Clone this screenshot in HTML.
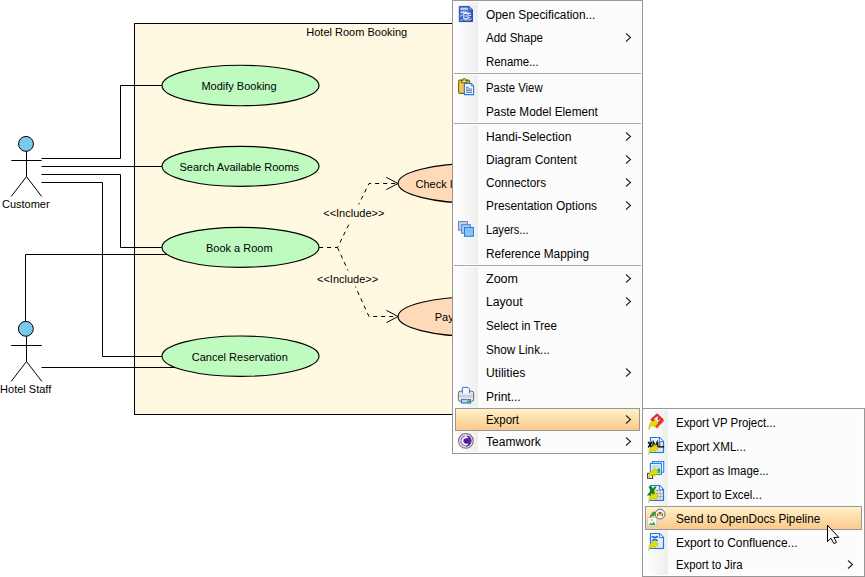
<!DOCTYPE html>
<html><head><meta charset="utf-8">
<style>
html,body{margin:0;padding:0;width:865px;height:577px;overflow:hidden;background:#fff;position:relative;font-family:"Liberation Sans",sans-serif;}
svg.d{position:absolute;left:0;top:0;}
.menu{position:absolute;background:#fcfcfc;border:1px solid #979797;box-sizing:border-box;box-shadow:inset 0 0 0 1px #fff;}
.col{position:absolute;top:1px;bottom:1px;background:linear-gradient(to right,#ffffff,#eeeeee);}
.t{position:absolute;font-size:12px;transform-origin:0 0;color:#000;white-space:pre;line-height:14px;}
.sep{position:absolute;height:1px;background:#a8a8a8;}
.sepw{position:absolute;height:3px;background:#fcfcfc;}
.hl{position:absolute;box-sizing:border-box;border:1px solid #979797;background:linear-gradient(to bottom,#fff1c8,#fdd9a4 60%,#fbc98c);}
.arr{position:absolute;}
</style></head><body>
<svg class="d" width="865" height="577" viewBox="0 0 865 577">
 <rect x="134.5" y="23.5" width="400" height="391" fill="#fff9e1" stroke="#000" stroke-width="1"/>
 <g font-family="Liberation Sans" font-size="11" fill="#000">
  <text x="306.3" y="36">Hotel Room Booking</text>
 </g>
 <g fill="none" stroke="#000" stroke-width="1">
  <!-- customer lines -->
  <polyline points="41.5,158.5 120.5,158.5 120.5,85.5 162,85.5"/>
  <polyline points="41.5,166.5 162,166.5"/>
  <polyline points="41.5,174.5 120.5,174.5 120.5,247.5 162,247.5"/>
  <polyline points="41.5,182.5 102.5,182.5 102.5,356.5 162,356.5"/>
  <!-- staff lines -->
  <polyline points="25.5,321.2 25.5,254.5 167,254.5"/>
  <polyline points="41.5,367.5 175,367.5"/>
 </g>
 <g fill="none" stroke="#000" stroke-width="1" stroke-dasharray="4,4">
  <polyline points="319,247.5 337.5,247.5 369,183.5 398,183.5"/>
  <polyline points="337.5,247.5 369,316.5 398,316.5"/>
 </g>
 <g fill="#bffbbf" stroke="#000" stroke-width="1.15">
  <ellipse cx="240.5" cy="85.5" rx="78.5" ry="20.3"/>
  <ellipse cx="240.5" cy="166.3" rx="78.5" ry="20"/>
  <ellipse cx="240.5" cy="247.3" rx="78.5" ry="20"/>
  <ellipse cx="240.5" cy="356.2" rx="78.5" ry="20.2"/>
 </g>
 <g fill="#fedab9" stroke="#000" stroke-width="1.15">
  <ellipse cx="476.6" cy="183.3" rx="78.5" ry="19.9"/>
  <ellipse cx="476.6" cy="316.6" rx="78.5" ry="19.9"/>
 </g>
 <rect x="321" y="204.5" width="65" height="17" fill="#fff9e1"/>
 <rect x="315" y="270.5" width="65" height="16" fill="#fff9e1"/>
 <g font-family="Liberation Sans" font-size="11" fill="#000" text-anchor="middle">
  <text x="239" y="90">Modify Booking</text>
  <text x="239.3" y="170.5">Search Available Rooms</text>
  <text x="239.3" y="251.5">Book a Room</text>
  <text x="239.8" y="360.5">Cancel Reservation</text>
  <text x="353.8" y="217">&lt;&lt;Include&gt;&gt;</text>
  <text x="347.6" y="283">&lt;&lt;Include&gt;&gt;</text>
 </g>
 <g font-family="Liberation Sans" font-size="11" fill="#000">
  <text x="415.5" y="188">Check In</text>
  <text x="434.7" y="320.5">Pay</text>
 </g>

 <g fill="none" stroke="#000" stroke-width="1">
  <polyline points="386.4,177.4 398,183.5 386.4,189.5"/>
  <polyline points="386.4,310.3 398,316.5 386.4,322.6"/>
 </g>
 <!-- actors -->
 <g fill="none" stroke="#000" stroke-width="1">
  <circle cx="26" cy="143.9" r="7.45" fill="#7ac8f0"/>
  <line x1="11.3" y1="160.5" x2="41.7" y2="160.5"/>
  <line x1="26.5" y1="151.4" x2="26.5" y2="176.6"/>
  <polyline points="11.2,196.5 26.5,176.6 41.7,196.5"/>
  <circle cx="25.85" cy="328.8" r="7.45" fill="#7ac8f0"/>
  <line x1="11.2" y1="345.5" x2="41.8" y2="345.5"/>
  <line x1="26.5" y1="336.3" x2="26.5" y2="361.5"/>
  <polyline points="11.2,381.4 26.5,361.5 41.8,381.4"/>
 </g>
 <g font-family="Liberation Sans" font-size="11" fill="#000" text-anchor="middle">
  <text x="25.8" y="208">Customer</text>
  <text x="25.7" y="393">Hotel Staff</text>
 </g>
</svg>

<!-- main menu -->
<div class="menu" style="left:452px;top:0px;width:191px;height:454px;">
</div>
<div class="col" style="left:455px;top:2px;width:23px;height:450px;"></div>
<div class="sepw" style="left:453px;top:72px;width:189px;"></div>
<div class="sep" style="left:454px;top:73px;width:187px;"></div>
<div class="sepw" style="left:453px;top:122px;width:189px;"></div>
<div class="sep" style="left:454px;top:123px;width:187px;"></div>
<div class="sepw" style="left:453px;top:264px;width:189px;"></div>
<div class="sep" style="left:454px;top:265px;width:187px;"></div>
<div class="hl" style="left:455px;top:408px;width:185px;height:23px;"></div>


<svg width="0" height="0" style="position:absolute"><defs><linearGradient id="gd" x1="0" y1="0" x2="0" y2="1"><stop offset="0" stop-color="#fafbfd"/><stop offset="1" stop-color="#d9dfe9"/></linearGradient></defs></svg>
<!-- main icons -->
<svg style="position:absolute;left:455px;top:3px" width="22" height="22" viewBox="0 0 22 22">
 <defs><linearGradient id="gb" x1="0" y1="0" x2="1" y2="1"><stop offset="0" stop-color="#3d6fd4"/><stop offset="1" stop-color="#2450b0"/></linearGradient></defs>
 <path d="M4.3,3.4 L14.4,3.4 L17.5,6.6 L17.5,18.6 L4.3,18.6 Z" fill="url(#gb)" stroke="#2a4fa6" stroke-width="1"/>
 <path d="M14.4,3.4 L14.4,6.6 L17.5,6.6 Z" fill="#7d9fe6"/>
 <rect x="5.4" y="4.6" width="7.6" height="2.4" fill="#aabfee"/>
 <rect x="5.4" y="5.5" width="7.6" height="0.6" fill="#d9e3f8"/>
 <rect x="5.4" y="7.6" width="9" height="0.9" fill="#8aa7e6"/>
 <path d="M5.6,9.8 C7.5,8.9 10.5,9 13,10.3 L15.8,10.3" stroke="#eef3fd" stroke-width="1.2" fill="none"/>
 <rect x="8.8" y="10.4" width="4.2" height="5.4" fill="none" stroke="#eef3fd" stroke-width="1.1"/>
 <rect x="10.2" y="11.8" width="1.4" height="2.4" fill="#c5d5f5"/>
 <path d="M5.4,12.2 L7.6,12.2 M5.4,13.6 L6.2,13.6 M13.6,12.4 L16.2,12.4 M13.6,14.4 L15.2,14.4 M9.4,16.8 L12.4,16.8 M13.2,17.4 L16.6,15.8" stroke="#e6edfb" stroke-width="1" fill="none"/>
 <rect x="5.4" y="16.6" width="2.2" height="1" fill="#dfe8fa"/>
</svg>
<svg style="position:absolute;left:455px;top:74px" width="22" height="22" viewBox="0 0 22 22">
 <defs><linearGradient id="gc" x1="0" y1="0" x2="1" y2="0"><stop offset="0" stop-color="#f0d27a"/><stop offset="1" stop-color="#d9a93a"/></linearGradient></defs>
 <rect x="3.6" y="6.2" width="11" height="13.2" rx="1.2" fill="url(#gc)" stroke="#7f6a00" stroke-width="1.2"/>
 <path d="M6.4,8.8 L6.4,6.4 L7.8,6.4 C7.8,3.9 10.6,3.9 10.6,6.4 L12,6.4 L12,8.8 Z" fill="#f3dc80" stroke="#7f6a00" stroke-width="1.1"/>
 <path d="M9.4,9.5 L16.4,9.5 L18.6,11.7 L18.6,20.6 L9.4,20.6 Z" fill="#f6f3ea" stroke="#1f7fe8" stroke-width="1.1"/>
 <path d="M11,13.3 L13.6,13.3 M11,15 L17,15 M11,16.7 L17,16.7 M11,18.4 L17,18.4" stroke="#5a78bc" stroke-width="1"/><path d="M16.2,9.8 L16.2,11.9 L18.3,11.9" fill="#fff" stroke="#1f7fe8" stroke-width="0.9"/>
</svg>
<svg style="position:absolute;left:455px;top:219px" width="22" height="22" viewBox="0 0 22 22">
 <rect x="3.55" y="2.6" width="8.8" height="8.6" fill="#c3d3e8" stroke="#5d86b8" stroke-width="1"/>
 <rect x="6.6" y="5.7" width="8.8" height="8.6" fill="#b0cdee" stroke="#3f85d6" stroke-width="1"/>
 <rect x="9.5" y="8.5" width="9" height="8.8" fill="#8fc0f2" stroke="#1e7fe4" stroke-width="1"/>
</svg>
<svg style="position:absolute;left:455px;top:385px" width="22" height="22" viewBox="0 0 22 22">
 <rect x="3.4" y="6.2" width="15.2" height="10.2" rx="2" fill="#e6e6e6" stroke="#666" stroke-width="1"/>
 <rect x="4.5" y="10" width="13" height="2.5" fill="#cfcfcf"/>
 <path d="M7.4,8.4 L7.4,2.4 L13,2.4 L14.4,3.8 L14.4,8.4" fill="#f4f6fa" stroke="#1e80ea" stroke-width="1"/>
 <path d="M6.2,14 L15.8,14 L16.2,18.6 L5.8,18.6 Z" fill="#1d5fd6"/>
 <path d="M7,14.8 L15,14.8 L15.3,17.6 L6.8,17.6 Z" fill="#b9d3f2"/>
 <path d="M10.5,14.8 L13,14.8 L12,16 Z" fill="#e0c000"/>
 <path d="M12,16.2 L15,14.8 L15.3,17.6 L12.5,17.6 Z" fill="#1cc030"/>
</svg>
<svg style="position:absolute;left:455px;top:430px" width="22" height="22" viewBox="0 0 22 22">
 <circle cx="10.9" cy="10.9" r="7.3" fill="#fdfdfd" stroke="#747474" stroke-width="1.2"/>
 <circle cx="10.9" cy="10.9" r="5.7" fill="#9a6ad0"/>
 <path d="M10.9,5.2 A5.7,5.7 0 0 1 10.9,16.6 Z" fill="#5b2a9e"/>
 <path d="M12.7,7.8 A3.6,3.6 0 1 0 12.7,14" fill="none" stroke="#fff" stroke-width="1.5"/>
 <path d="M10.9,4.8 L10.9,7.6" stroke="#fff" stroke-width="1.6"/>
 <circle cx="11.1" cy="11.1" r="2.3" fill="#4c1a8c"/>
</svg>
<div class="t" style="left:486px;top:8px;transform:scaleX(0.988)">Open Specification...</div>
<div class="t" style="left:486px;top:31px;transform:scaleX(0.959)">Add Shape</div>
<svg class="arr" style="left:624.6px;top:32.9px" width="7" height="9" viewBox="0 0 7 9"><polyline points="1,0.5 5.5,4.5 1,8.5" fill="none" stroke="#222" stroke-width="1.1"/></svg>
<div class="t" style="left:486px;top:55px;transform:scaleX(0.952)">Rename...</div>
<div class="t" style="left:486px;top:81px;transform:scaleX(0.946)">Paste View</div>
<div class="t" style="left:486px;top:105px;transform:scaleX(0.98)">Paste Model Element</div>
<div class="t" style="left:486px;top:130px;transform:scaleX(1.008)">Handi-Selection</div>
<svg class="arr" style="left:624.6px;top:131.9px" width="7" height="9" viewBox="0 0 7 9"><polyline points="1,0.5 5.5,4.5 1,8.5" fill="none" stroke="#222" stroke-width="1.1"/></svg>
<div class="t" style="left:486px;top:153px;transform:scaleX(1.0)">Diagram Content</div>
<svg class="arr" style="left:624.6px;top:154.9px" width="7" height="9" viewBox="0 0 7 9"><polyline points="1,0.5 5.5,4.5 1,8.5" fill="none" stroke="#222" stroke-width="1.1"/></svg>
<div class="t" style="left:486px;top:176px;transform:scaleX(0.979)">Connectors</div>
<svg class="arr" style="left:624.6px;top:177.9px" width="7" height="9" viewBox="0 0 7 9"><polyline points="1,0.5 5.5,4.5 1,8.5" fill="none" stroke="#222" stroke-width="1.1"/></svg>
<div class="t" style="left:486px;top:199px;transform:scaleX(0.99)">Presentation Options</div>
<svg class="arr" style="left:624.6px;top:200.9px" width="7" height="9" viewBox="0 0 7 9"><polyline points="1,0.5 5.5,4.5 1,8.5" fill="none" stroke="#222" stroke-width="1.1"/></svg>
<div class="t" style="left:486px;top:223px;transform:scaleX(0.925)">Layers...</div>
<div class="t" style="left:486px;top:247px;transform:scaleX(0.984)">Reference Mapping</div>
<div class="t" style="left:486px;top:272px;transform:scaleX(1.043)">Zoom</div>
<svg class="arr" style="left:624.6px;top:273.9px" width="7" height="9" viewBox="0 0 7 9"><polyline points="1,0.5 5.5,4.5 1,8.5" fill="none" stroke="#222" stroke-width="1.1"/></svg>
<div class="t" style="left:486px;top:295px;transform:scaleX(1.014)">Layout</div>
<svg class="arr" style="left:624.6px;top:296.9px" width="7" height="9" viewBox="0 0 7 9"><polyline points="1,0.5 5.5,4.5 1,8.5" fill="none" stroke="#222" stroke-width="1.1"/></svg>
<div class="t" style="left:486px;top:319px;transform:scaleX(0.968)">Select in Tree</div>
<div class="t" style="left:486px;top:343px;transform:scaleX(0.975)">Show Link...</div>
<div class="t" style="left:486px;top:366px;transform:scaleX(1.016)">Utilities</div>
<svg class="arr" style="left:624.6px;top:367.9px" width="7" height="9" viewBox="0 0 7 9"><polyline points="1,0.5 5.5,4.5 1,8.5" fill="none" stroke="#222" stroke-width="1.1"/></svg>
<div class="t" style="left:486px;top:390px;transform:scaleX(1.0)">Print...</div>
<div class="t" style="left:486px;top:413px;transform:scaleX(0.95)">Export</div>
<svg class="arr" style="left:624.6px;top:414.9px" width="7" height="9" viewBox="0 0 7 9"><polyline points="1,0.5 5.5,4.5 1,8.5" fill="none" stroke="#222" stroke-width="1.1"/></svg>
<div class="t" style="left:486px;top:435px;transform:scaleX(1.002)">Teamwork</div>
<svg class="arr" style="left:624.6px;top:436.9px" width="7" height="9" viewBox="0 0 7 9"><polyline points="1,0.5 5.5,4.5 1,8.5" fill="none" stroke="#222" stroke-width="1.1"/></svg>
<!-- submenu -->
<div class="menu" style="left:642px;top:408px;width:223px;height:169px;"></div>
<div class="col" style="left:645px;top:410px;width:23px;height:165px;"></div>
<div class="hl" style="left:645px;top:506px;width:217px;height:24px;"></div>
<!-- sub icons -->
<svg style="position:absolute;left:645px;top:410px" width="22" height="22" viewBox="0 0 22 22">
 <path d="M18.7,11.6 L12,18.5 L10,16.5 L18.7,9.5 Z" fill="#e23a3a"/>
 <path d="M12.1,3.2 L18.7,9.5 L12,16.3 L5.3,9.5 Z" fill="#e02a2a"/>
 <path d="M12.4,17.4 L18.3,11.3" stroke="#fff" stroke-width="0.7" stroke-dasharray="1,0.9"/>
 <path d="M12.1,6.3 L15.4,9.5 L12,13 L8.6,9.5 Z" fill="#fff"/>
 <rect x="12.5" y="7.6" width="2" height="2.6" fill="#e02a2a"/>
 <path d="M13.4,12.9 L9.5,8.9 L9.5,11 C5.8,11.3 3.4,14 3.9,19.5 C4.9,16.9 6.9,15.4 9.5,15.2 L9.5,17.2 Z" fill="#e2de00" stroke="#b5ad00" stroke-width="0.5"/>
</svg>
<svg style="position:absolute;left:645px;top:435px" width="22" height="22" viewBox="0 0 22 22">
 <path d="M5.5,2.5 L14.6,2.5 L18.5,6.4 L18.5,17.5 L5.5,17.5 Z" fill="url(#gd)" stroke="#1a78e6" stroke-width="1.2"/><path d="M14.3,2.8 L14.3,6.7 L18.2,6.7" fill="#fff" stroke="#1a78e6" stroke-width="1"/>
 <path d="M3.2,6.8 L7,12.4 M7,6.8 L3.2,12.4" stroke="#000" stroke-width="1.5"/>
 <path d="M7.6,12.4 L8.3,6.9 L10.3,10.8 L12.2,6.9 L12.9,12.4" stroke="#222" stroke-width="1.4" fill="none"/>
 <rect x="13.2" y="7" width="2.2" height="5.2" fill="#777"/>
 <rect x="13.2" y="11.2" width="6" height="1.3" fill="#000"/>
 <path d="M13.4,12.9 L9.5,8.9 L9.5,11 C5.8,11.3 3.4,14 3.9,19.5 C4.9,16.9 6.9,15.4 9.5,15.2 L9.5,17.2 Z" fill="#e2de00" stroke="#b5ad00" stroke-width="0.5"/>
</svg>
<svg style="position:absolute;left:645px;top:459px" width="22" height="22" viewBox="0 0 22 22">
 <rect x="7.4" y="2.6" width="11.3" height="10.6" fill="#f4f8fd" stroke="#1d82ee" stroke-width="1.1"/>
 <rect x="5.4" y="4.4" width="11" height="11" fill="#f4f8fd" stroke="#1d82ee" stroke-width="1.1"/>
 <rect x="6.8" y="5.8" width="8.3" height="8.3" fill="#c8dcf4"/>
 <path d="M11,14 C11.5,11 13,9 15.1,9.6 L15.1,14 Z" fill="#21b02e"/>
 <rect x="2.6" y="14.4" width="5" height="5" fill="#fff" stroke="#333" stroke-width="1"/>
 <path d="M13.4,12.9 L9.5,8.9 L9.5,11 C5.8,11.3 3.4,14 3.9,19.5 C4.9,16.9 6.9,15.4 9.5,15.2 L9.5,17.2 Z" fill="#e2de00" stroke="#b5ad00" stroke-width="0.5"/>
</svg>
<svg style="position:absolute;left:645px;top:483px" width="22" height="22" viewBox="0 0 22 22">
 <path d="M5.5,2.5 L14.6,2.5 L18.5,6.4 L18.5,17.5 L5.5,17.5 Z" fill="url(#gd)" stroke="#1a78e6" stroke-width="1.2"/><path d="M14.3,2.8 L14.3,6.7 L18.2,6.7" fill="#fff" stroke="#1a78e6" stroke-width="1"/>
 <path d="M10,7.5 L18,7.5 M10,10.5 L18,10.5 M10,13.5 L18,13.5 M12.2,6 L12.2,17 M15.2,6 L15.2,17" stroke="#a8a8a8" stroke-width="0.9"/>
 <path d="M3.4,3.6 L6.8,3.6 L7.9,5.8 L9.4,3.6 L11.8,3.6 L9.2,7.6 L11.2,12.4 L8,12.4 L6.9,9.9 L5.2,12.4 L1.9,12.4 L5.5,7.7 Z" fill="#1a7d1e"/>
 <path d="M13.4,12.9 L9.5,8.9 L9.5,11 C5.8,11.3 3.4,14 3.9,19.5 C4.9,16.9 6.9,15.4 9.5,15.2 L9.5,17.2 Z" fill="#e2de00" stroke="#b5ad00" stroke-width="0.5"/>
</svg>
<svg style="position:absolute;left:645px;top:507px" width="22" height="22" viewBox="0 0 22 22">
 <rect x="2.8" y="10.4" width="9" height="9" fill="#fdfdfd" stroke="#c6c9d0" stroke-width="1"/>
 <circle cx="6.6" cy="13" r="1.1" fill="#f2b400"/>
 <path d="M3.6,18.3 L5.6,15.5 L7,16.8 L8.6,14.4 L10.8,18.3 Z" fill="#3fab45"/>
 <path d="M4.9,10.6 C5,8.6 5.6,7 7.1,6.2 L7.3,4.8 L11.8,4.8 L11.4,6.6 C10.6,7.8 9.6,8.6 8.3,8.9 C7,9.3 6,10 5.6,10.8 Z" fill="#3aa02a"/>
 <circle cx="15.1" cy="7.1" r="4.9" fill="#f4f1e6" stroke="#63708a" stroke-width="1"/>
 <path d="M13.4,5 L16.8,5 L16.2,7 L14,7 Z" fill="#8a6a4a"/>
 <rect x="12.8" y="7" width="4.6" height="1.6" fill="#f2c400"/>
 <rect x="12.2" y="6.4" width="0.9" height="3" fill="#7a4a5a"/><rect x="17.1" y="6.4" width="0.9" height="3" fill="#7a4a5a"/>
</svg>
<svg style="position:absolute;left:645px;top:531px" width="22" height="22" viewBox="0 0 22 22">
 <path d="M5.5,2.5 L14.6,2.5 L18.5,6.4 L18.5,17.5 L5.5,17.5 Z" fill="url(#gd)" stroke="#1a78e6" stroke-width="1.2"/><path d="M14.3,2.8 L14.3,6.7 L18.2,6.7" fill="#fff" stroke="#1a78e6" stroke-width="1"/>
 <path d="M7,5.2 C8.4,7 11.2,7 12.6,5.2 M7,10 C8.4,8.2 11.2,8.2 12.6,10" stroke="#1e6ee6" stroke-width="1.9" fill="none"/>
 <path d="M13.4,12.9 L9.5,8.9 L9.5,11 C5.8,11.3 3.4,14 3.9,19.5 C4.9,16.9 6.9,15.4 9.5,15.2 L9.5,17.2 Z" fill="#e2de00" stroke="#b5ad00" stroke-width="0.5"/>
</svg>
<div class="t" style="left:676px;top:416px;transform:scaleX(0.954)">Export VP Project...</div>
<div class="t" style="left:676px;top:440px;transform:scaleX(0.962)">Export XML...</div>
<div class="t" style="left:676px;top:464px;transform:scaleX(0.952)">Export as Image...</div>
<div class="t" style="left:676px;top:488px;transform:scaleX(0.946)">Export to Excel...</div>
<div class="t" style="left:676px;top:512px;transform:scaleX(0.978)">Send to OpenDocs Pipeline</div>
<div class="t" style="left:676px;top:536px;transform:scaleX(0.996)">Export to Confluence...</div>
<div class="t" style="left:676px;top:558px;transform:scaleX(0.941)">Export to Jira</div>
<svg class="arr" style="left:847px;top:559.9px" width="7" height="9" viewBox="0 0 7 9"><polyline points="1,0.5 5.5,4.5 1,8.5" fill="none" stroke="#222" stroke-width="1.1"/></svg>

<svg style="position:absolute;left:820px;top:518px" width="30" height="30" viewBox="820 518 30 30">
 <path d="M827.5,525.3 L827.5,541.6 L831,538.2 L833.9,543.6 L836.5,542.4 L833.9,537.4 L838.8,537.4 Z" fill="#fff" stroke="#000" stroke-width="1" stroke-linejoin="miter"/>
</svg>
</body></html>
